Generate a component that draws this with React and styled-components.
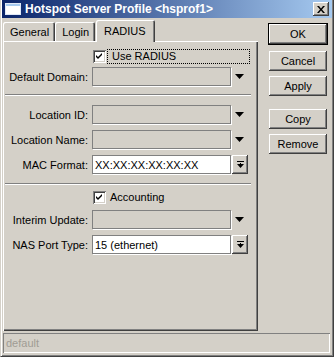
import React from 'react';
import styled, { createGlobalStyle } from 'styled-components';

const Global = createGlobalStyle`
  html, body {
    margin: 0;
    padding: 0;
    background: #d4d0c8;
  }
  #root {
    width: 334px;
    height: 357px;
  }
`;

const Window = styled.div`
  width: 334px;
  height: 357px;
  box-sizing: border-box;
  display: flex;
  flex-direction: column;
  background: #d4d0c8;
  font-family: "Liberation Sans", Arial, sans-serif;
  font-size: 11px;
  color: #000;
  border-left: 1px solid #d4d0c8;
  border-right: 1px solid #404040;
  border-bottom: 1px solid #404040;
  box-shadow: inset 1px 0 #fff, inset -1px -1px #808080;
  padding: 0 2px 2px 2px;
  overflow: hidden;
`;

const TitleBar = styled.div`
  height: 18px;
  margin: 0 -1px;
  display: flex;
  align-items: center;
  padding: 0 3px 0 3px;
  background: linear-gradient(to right, #0a246a, #a6caf0);
  color: #fff;
  font-weight: bold;
  font-size: 12px;
  gap: 4px;
`;

const TitleText = styled.span`
  flex: 1;
  white-space: nowrap;
`;

const CloseButton = styled.div`
  width: 16px;
  height: 14px;
  display: flex;
  align-items: center;
  justify-content: center;
  background: #d4d0c8;
  box-shadow: inset -1px -1px #404040, inset 1px 1px #fff, inset -2px -2px #808080;
`;

const Main = styled.div`
  flex: 1;
  display: flex;
  gap: 10px;
`;

const LeftColumn = styled.div`
  width: 255px;
  display: flex;
  flex-direction: column;
`;

const TabBar = styled.div`
  height: 23px;
  display: flex;
  align-items: flex-end;
`;

const Tab = styled.div`
  position: relative;
  z-index: ${p => (p.$active ? 2 : 1)};
  height: ${p => (p.$active ? '22px' : '19px')};
  margin-bottom: ${p => (p.$active ? '-1px' : '0')};
  margin-left: ${p => (p.$active ? '1px' : '0')};
  padding: ${p => (p.$active ? '0 9px 0 8px' : '1px 6px 0 7px')};
  box-sizing: border-box;
  display: flex;
  align-items: center;
  background: #d4d0c8;
  border-radius: 2px 2px 0 0;
  box-shadow: inset 1px 1px #fff, inset -1px 0 #404040, inset -2px 0 #808080;
  white-space: nowrap;
`;

const Panel = styled.div`
  flex: 1;
  display: flex;
  flex-direction: column;
  padding: 7px 0 0 1px;
  box-sizing: border-box;
  box-shadow: inset 1px 1px #fff, inset -1px -1px #404040, inset -2px -2px #808080;
`;

const CheckRow = styled.div`
  height: 16px;
  display: flex;
  align-items: center;
  padding-left: 89px;
  margin-top: ${p => p.$mt || 0}px;
`;

const CheckBox = styled.div`
  width: 13px;
  height: 13px;
  box-sizing: border-box;
  background: #fff;
  box-shadow: inset 1px 1px #808080, inset -1px -1px #fff, inset 2px 2px #404040, inset -2px -2px #d4d0c8;
  display: flex;
  align-items: center;
  justify-content: center;
`;

const CheckLabel = styled.span`
  height: 15px;
  box-sizing: border-box;
  display: flex;
  align-items: center;
  margin-left: 1px;
  padding-left: ${p => (p.$focus ? '4px' : '2px')};
  width: ${p => (p.$focus ? '143px' : 'auto')};
  border: 1px dotted ${p => (p.$focus ? '#000' : 'transparent')};
`;

const Row = styled.div`
  height: 19px;
  display: flex;
  align-items: center;
  margin-top: ${p => p.$mt || 0}px;
`;

const Label = styled.div`
  width: 84px;
  text-align: right;
  white-space: nowrap;
  margin-right: 4px;
`;

const Field = styled.div`
  width: 139px;
  height: 19px;
  box-sizing: border-box;
  border: 1px solid #808080;
  box-shadow: 1px 1px 0 #fff;
  background: ${p => (p.$enabled ? '#fff' : '#d4d0c8')};
  display: flex;
  align-items: center;
  padding-left: 2px;
  white-space: nowrap;
  overflow: hidden;
`;

const ArrowSlot = styled.div`
  width: 18px;
  height: 19px;
  display: flex;
  align-items: center;
  justify-content: center;
`;

const DropButton = styled.div`
  width: 16px;
  height: 19px;
  box-sizing: border-box;
  display: flex;
  align-items: center;
  justify-content: center;
  background: #d4d0c8;
  box-shadow: inset -1px -1px #404040, inset 1px 1px #fff, inset -2px -2px #808080;
`;

const Separator = styled.div`
  height: 0;
  border-top: 1px solid #808080;
  border-bottom: 1px solid #fff;
  margin: ${p => p.$mt || 0}px 7px 0 1px;
`;

const ButtonColumn = styled.div`
  width: 60px;
  display: flex;
  flex-direction: column;
  padding-top: 5px;
`;

const Button = styled.div`
  height: 22px;
  box-sizing: border-box;
  display: flex;
  align-items: center;
  justify-content: center;
  background: #d4d0c8;
  border: 1px solid ${p => (p.$default ? '#000' : 'transparent')};
  box-shadow: inset -1px -1px #404040, inset 1px 1px #fff, inset -2px -2px #808080;
  margin-top: ${p => p.$mt || 0}px;
  font-size: 11px;
`;

const StatusBar = styled.div`
  height: 20px;
  margin: 2px 1px 1px 0;
  box-sizing: border-box;
  display: flex;
  align-items: center;
  padding-left: 3px;
  color: #a09c94;
  box-shadow: inset 1px 1px #808080, inset -1px -1px #fff;
`;

const Arrow = () => (
  <svg width="10" height="5" viewBox="0 0 10 5">
    <polygon points="0,0 9,0 4.5,5" fill="#000" />
  </svg>
);

const BarArrow = () => (
  <svg width="7" height="8" viewBox="0 0 7 8">
    <rect x="0" y="0" width="7" height="1" fill="#000" />
    <polygon points="0,3 7,3 3.5,7" fill="#000" />
    <rect x="3" y="2" width="1" height="1" fill="#000" />
  </svg>
);

const Check = () => (
  <svg width="7" height="7" viewBox="0 0 7 7">
    <path d="M0 2 L2 4 L6 0 L6 2 L2 6 L0 4 Z" fill="#000" />
  </svg>
);

const WindowIcon = () => (
  <svg width="16" height="12" viewBox="0 0 16 12">
    <rect x="0.5" y="0.5" width="15" height="11" fill="#fff" stroke="#dfe8f8" />
    <rect x="1" y="1" width="14" height="2" fill="#a6caf0" />
  </svg>
);

const CloseX = () => (
  <svg width="8" height="7" viewBox="0 0 8 7">
    <path d="M0 0 L2 0 L4 2.5 L6 0 L8 0 L5 3.5 L8 7 L6 7 L4 4.5 L2 7 L0 7 L3 3.5 Z" fill="#000" />
  </svg>
);

function Combo({ label, value, enabled, mt }) {
  return (
    <Row $mt={mt}>
      <Label>{label}</Label>
      <Field $enabled={enabled}>{value}</Field>
      <ArrowSlot>{enabled ? <DropButton><BarArrow /></DropButton> : <Arrow />}</ArrowSlot>
    </Row>
  );
}

export default function App() {
  return (
    <>
      <Global />
      <Window>
        <TitleBar>
          <WindowIcon />
          <TitleText>Hotspot Server Profile &lt;hsprof1&gt;</TitleText>
          <CloseButton><CloseX /></CloseButton>
        </TitleBar>
        <Main>
          <LeftColumn>
            <TabBar>
              <Tab>General</Tab>
              <Tab>Login</Tab>
              <Tab $active>RADIUS</Tab>
            </TabBar>
            <Panel>
              <CheckRow>
                <CheckBox><Check /></CheckBox>
                <CheckLabel $focus>Use RADIUS</CheckLabel>
              </CheckRow>
              <Combo label="Default Domain:" mt={3} />
              <Separator $mt={8} />
              <Combo label="Location ID:" mt={9} />
              <Combo label="Location Name:" mt={6} />
              <Combo label="MAC Format:" value="XX:XX:XX:XX:XX:XX" enabled mt={6} />
              <Separator $mt={9} />
              <CheckRow $mt={4}>
                <CheckBox><Check /></CheckBox>
                <CheckLabel>Accounting</CheckLabel>
              </CheckRow>
              <Combo label="Interim Update:" mt={5} />
              <Combo label="NAS Port Type:" value="15 (ethernet)" enabled mt={6} />
            </Panel>
          </LeftColumn>
          <ButtonColumn>
            <Button $default>OK</Button>
            <Button $mt={5}>Cancel</Button>
            <Button $mt={3}>Apply</Button>
            <Button $mt={11}>Copy</Button>
            <Button $mt={3}>Remove</Button>
          </ButtonColumn>
        </Main>
        <StatusBar>default</StatusBar>
      </Window>
    </>
  );
}
